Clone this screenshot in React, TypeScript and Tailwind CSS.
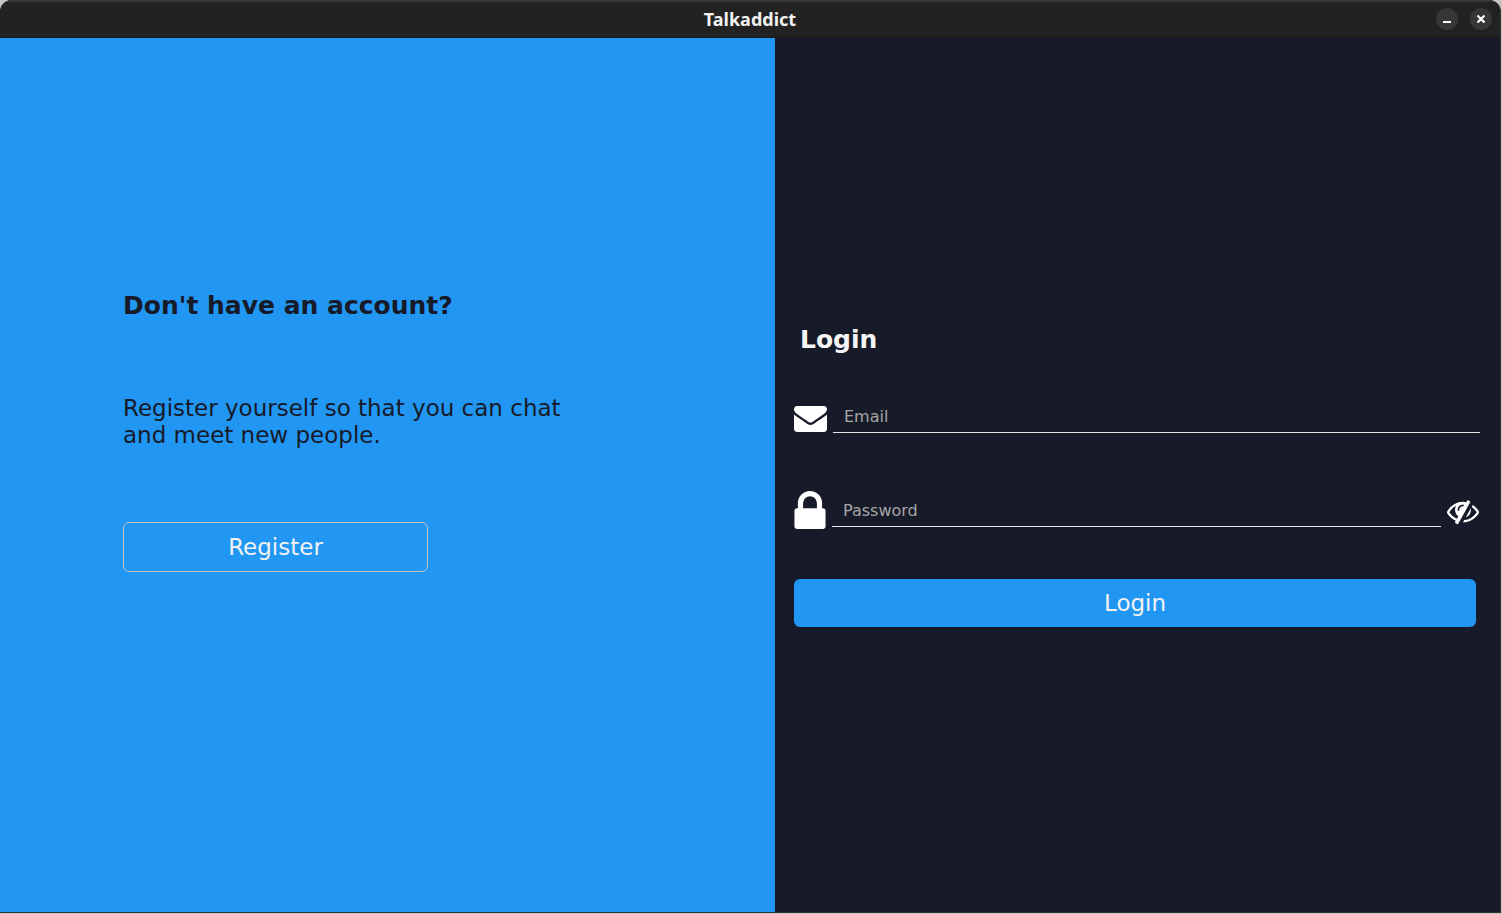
import { useState } from "react";

function EnvelopeIcon() {
  return (
    <svg viewBox="0 256 1792 1408" className="h-[26px] w-[33px]" fill="currentColor" aria-hidden="true">
      <path d="M1792 710v794q0 66-47 113t-113 47h-1472q-66 0-113-47t-47-113v-794q44 49 101 87 362 246 497 345 57 42 92.500 65.500t94.500 48 110 24.500h2q51 0 110-24.500t94.500-48 92.500-65.500q170-123 498-345 57-39 100-87zm0-294q0 79-49 151t-122 123q-376 261-468 325-10 7-42.500 31t-54 38.800-52 33.200-57.500 27-50 9h-2q-23 0-50-9t-57.500-27-52-33.200-54-38.800-42.500-31q-91-64-262-182.500t-205-142.500q-62-42-117-115.500t-55-136.500q0-78 41.500-130t118.500-52h1472q65 0 112.500 47t47.500 113z" />
    </svg>
  );
}

function LockIcon() {
  return (
    <svg viewBox="320 128 1152 1408" className="h-[38px] w-8" fill="currentColor" aria-hidden="true">
      <path d="M640 768h512v-192q0-106-75-181t-181-75-181 75-75 181v192zm832 96v576q0 40-28 68t-68 28h-960q-40 0-68-28t-28-68v-576q0-40 28-68t68-28h32v-192q0-184 132-316t316-132 316 132 132 316v192h32q40 0 68 28t28 68z" />
    </svg>
  );
}

function EyeSlash() {
  return (
    <svg viewBox="0 0 1792 1792" className="size-8" fill="currentColor" aria-hidden="true">
      <path d="M555 1335l78-141q-87-63-136-159t-49-203q0-121 61-225-229 117-381 353 167 258 427 375zm389-759q0-20-14-34t-34-14q-125 0-214.5 89.5t-89.5 214.5q0 20 14 34t34 14 34-14 14-34q0-86 61-147t147-61q20 0 34-14t14-34zm363-191q0 7-1 9-106 189-316 567t-315 566l-49 89q-10 16-28 16-12 0-134-70-16-10-16-28 0-12 44-87-143-65-263.5-173t-208.5-245q-20-31-20-69t20-69q153-235 380-371t496-136q89 0 180 17l54-97q10-16 28-16 5 0 18 6t31 15.5 33 18.5 31.5 18.5 19.5 11.5q16 10 16 27zm37 447q0 139-79 253.5t-209 164.5l280-502q8 45 8 84zm448 128q0 35-20 69-39 64-109 145-150 172-347.5 267t-419.5 95l74-132q212-18 392.5-137t301.5-307q-115-179-282-294l63-112q95 64 182.5 153t144.5 184q20 34 20 69z" />
    </svg>
  );
}

function TitleBar() {
  return (
    <header className="grid h-[38px] shrink-0 grid-cols-[1fr_auto_1fr] items-center border-t-2 border-b border-t-[#373737] border-b-[#191919] bg-[#222222] px-2 pb-[2px]">
      <h1 className="col-start-2 font-['Noto_Sans',sans-serif] text-lg leading-6 font-bold text-[#f2f2f2]">
        Talkaddict
      </h1>
      <div className="flex justify-end gap-3">
        <button type="button" aria-label="Minimize" className="flex size-[22px] items-center justify-center rounded-full bg-[#373737] text-white">
          <svg viewBox="0 0 22 22" className="size-[22px]" aria-hidden="true">
            <path d="M7 14h8" stroke="currentColor" strokeWidth="2" />
          </svg>
        </button>
        <button type="button" aria-label="Close" className="flex size-[22px] items-center justify-center rounded-full bg-[#373737] text-white">
          <svg viewBox="0 0 22 22" className="size-[22px]" aria-hidden="true">
            <path d="M7.5 7.5l7 7m0-7l-7 7" stroke="currentColor" strokeWidth="2.2" />
          </svg>
        </button>
      </div>
    </header>
  );
}

export default function App() {
  const [visible, setVisible] = useState(false);
  return (
    <div className="flex min-h-screen flex-col bg-[#c8c4c1] pr-px pb-px font-['DejaVu_Sans',sans-serif]">
      <div className="flex grow flex-col overflow-hidden rounded-t-xl border-r border-b border-[#343434] bg-[#222222]">
        <TitleBar />
        <main className="grid grow grid-cols-[775fr_725fr]">
          <section className="bg-[#2196f3] px-[123px] pt-[253px] text-[#171a28]">
            <h2 className="text-[25px] leading-[30px] font-bold">Don't have an account?</h2>
            <p className="mt-[74px] max-w-[440px] text-[23px] leading-[27px]">
              Register yourself so that you can chat and meet new people.
            </p>
            <button type="button" className="mt-[73px] h-[50px] w-[305px] rounded-md border border-[#c3c6c9] text-[23px] leading-[27px] text-[#f2f2f2]">
              Register
            </button>
          </section>
          <section className="bg-[#171a28] pt-[287px] pr-5 pl-[19px] text-white">
            <h2 className="pl-[6px] text-[25px] leading-[30px] font-bold text-[#f5f5f5]">Login</h2>
            <form onSubmit={(event) => event.preventDefault()}>
              <div className="mt-[46px] flex items-end gap-[6px]">
                <label htmlFor="email" aria-label="Email" className="pb-px">
                  <EnvelopeIcon />
                </label>
                <input
                  id="email"
                  type="email"
                  placeholder="Email"
                  className="h-8 min-w-0 grow border-b border-[#e4e4e4] bg-transparent px-[11px] text-base text-[#f2f2f2] outline-none placeholder:text-[#a6a6a6]"
                />
              </div>
              <div className="mt-[58px] flex items-end gap-[6px]">
                <label htmlFor="password" aria-label="Password">
                  <LockIcon />
                </label>
                <input
                  id="password"
                  type={visible ? "text" : "password"}
                  placeholder="Password"
                  className="mb-[2px] h-8 min-w-0 grow border-b border-[#e4e4e4] bg-transparent px-[11px] text-base text-[#f2f2f2] outline-none placeholder:text-[#a6a6a6]"
                />
                <button type="button" aria-label="Toggle password visibility" className="pr-px pb-[2px]" onClick={() => setVisible(!visible)}>
                  <EyeSlash />
                </button>
              </div>
              <div className="pt-[50px] pr-1">
                <button type="submit" className="h-12 w-full rounded-md bg-[#2196f3] text-[23px] leading-[27px] text-[#f2f2f2]">
                  Login
                </button>
              </div>
            </form>
          </section>
        </main>
      </div>
    </div>
  );
}
